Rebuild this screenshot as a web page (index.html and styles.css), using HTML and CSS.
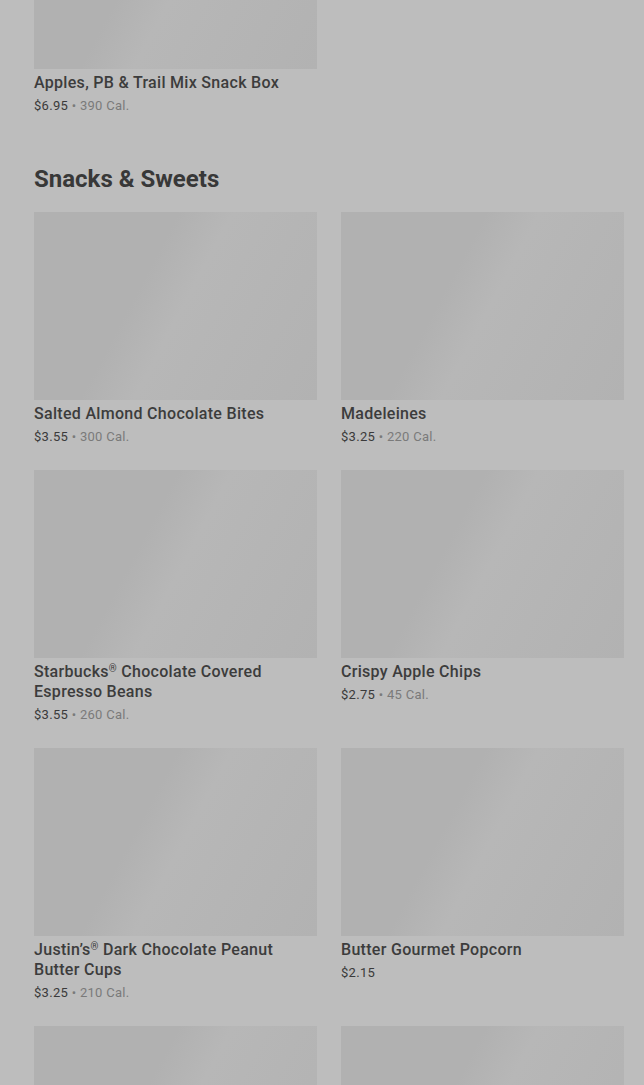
FILE: index.html
```
<html>
<head>
<title>Menu</title>
<meta http-equiv="Content-Type" content="text/html; charset=UTF-8" />
<link rel="stylesheet" href="styles.css">
</head>
<body>

<div class="Menu">
  <div class="Section first">
    <div class="Grid">
      <div class="Item">
        <div class="Pic"></div>
        <div class="Name">Apples, PB &amp; Trail Mix Snack Box</div>
        <div class="Price">$6.95 <span class="Cal">&bull; 390 Cal.</span></div>
      </div>
    </div>
  </div>

  <div class="Section">
    <h2 class="Heading">Snacks &amp; Sweets</h2>
    <div class="Grid">
      <div class="Item">
        <div class="Pic"></div>
        <div class="Name">Salted Almond Chocolate Bites</div>
        <div class="Price">$3.55 <span class="Cal">&bull; 300 Cal.</span></div>
      </div>
      <div class="Item">
        <div class="Pic"></div>
        <div class="Name">Madeleines</div>
        <div class="Price">$3.25 <span class="Cal">&bull; 220 Cal.</span></div>
      </div>
      <div class="Item">
        <div class="Pic"></div>
        <div class="Name">Starbucks<span class="Reg">&reg;</span> Chocolate Covered Espresso Beans</div>
        <div class="Price">$3.55 <span class="Cal">&bull; 260 Cal.</span></div>
      </div>
      <div class="Item">
        <div class="Pic"></div>
        <div class="Name">Crispy Apple Chips</div>
        <div class="Price">$2.75 <span class="Cal">&bull; 45 Cal.</span></div>
      </div>
      <div class="Item">
        <div class="Pic"></div>
        <div class="Name">Justin&rsquo;s<span class="Reg">&reg;</span> Dark Chocolate Peanut Butter Cups</div>
        <div class="Price">$3.25 <span class="Cal">&bull; 210 Cal.</span></div>
      </div>
      <div class="Item">
        <div class="Pic"></div>
        <div class="Name">Butter Gourmet Popcorn</div>
        <div class="Price">$2.15</div>
      </div>
      <div class="Item">
        <div class="Pic"></div>
      </div>
      <div class="Item">
        <div class="Pic"></div>
      </div>
    </div>
  </div>
</div>

</body>
</html>
```

FILE: styles.css
```
body{
   margin:0;
   background:#bdbdbd;
   font-family:Roboto, "Liberation Sans", sans-serif;
   -webkit-font-smoothing: antialiased;
   overflow:hidden;
}
.Menu{
   padding:0 20px 0 34px;
   margin-top:-119px;
}
.Section.first{
   margin-bottom:47px;
}
.Heading{
   margin:0 0 17px 0;
   font-size:24px;
   line-height:32px;
   font-weight:700;
   color:#383838;
}
.Grid{
   display:grid;
   grid-template-columns:283px 283px;
   column-gap:24px;
   row-gap:23px;
}
.Pic{
   height:188px;
   background:linear-gradient(118deg, #b1b1b1 0%, #b1b1b1 38%, #b7b7b7 52%, #b5b5b5 70%, #b2b2b2 100%);
}
.Name{
   margin-top:4px;
   font-size:16px;
   line-height:20px;
   font-weight:500;
   letter-spacing:0.3px;
   color:#3c3c3c;
}
.Reg{
   font-size:10px;
   vertical-align:5px;
   line-height:0;
}
.Price{
   margin-top:3px;
   font-size:13px;
   line-height:20px;
   letter-spacing:0.3px;
   color:#3a3a3a;
}
.Cal{
   color:#7a7a7a;
}
```
